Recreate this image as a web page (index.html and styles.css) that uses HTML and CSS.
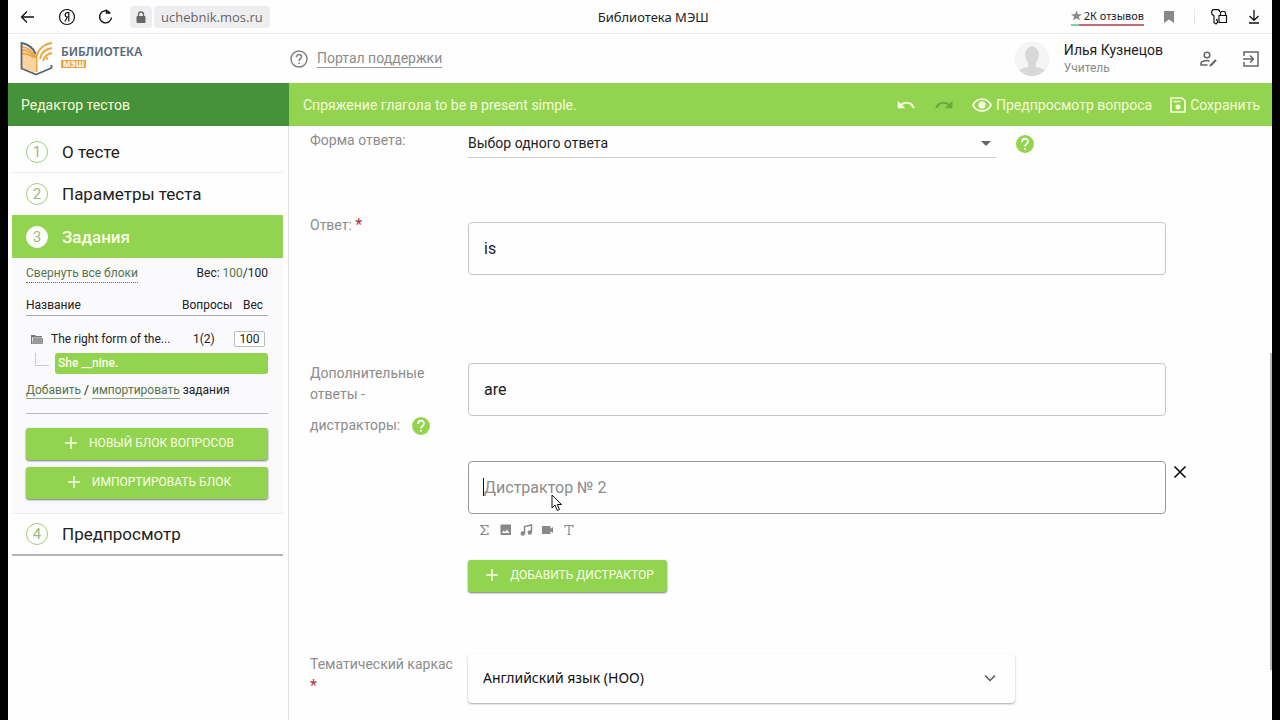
FILE: index.html
```html
<!DOCTYPE html>
<html lang="ru">
<head>
<meta charset="utf-8">
<meta name="viewport" content="width=device-width, initial-scale=1">
<title>Библиотека МЭШ</title>
<link rel="stylesheet" href="styles.css">
</head>
<body>
<svg class="sprite" aria-hidden="true">
  <symbol id="help" viewBox="0 0 20 20"><circle cx="10" cy="10" r="9" fill="currentColor"/><path d="M7 8c0-4.300 6-4.300 6-.5 0 2.500-3 2.500-3 5M10 14v1.800" fill="none" stroke="#fff" stroke-width="1.700"/></symbol>
  <symbol id="plus" viewBox="0 0 14 14"><path d="M7 1v12M1 7h12" stroke="currentColor" stroke-width="1.500" fill="none"/></symbol>
  <symbol id="undo" viewBox="0 0 24 24"><path d="M12.500 8A10.500 10.500 0 0 0 5.600 10.600L2 7v9h9l-3.600-3.600a8 8 0 0 1 12.700 3.600l2.400-.8A10.500 10.500 0 0 0 12.500 8z" fill="currentColor"/></symbol>
</svg>
<div class="page">
  <div class="browser">
    <button class="icon-btn" aria-label="Назад"><svg width="16" height="16" viewBox="0 0 16 16" fill="none" stroke="#111" stroke-width="1.300"><path d="M14 8H2M7 2.500 1.500 8 7 13.500"/></svg></button>
    <button class="icon-btn" aria-label="Яндекс"><svg width="18" height="18" viewBox="0 0 18 18" fill="none" stroke="#111" stroke-width="1.200"><circle cx="9" cy="9" r="7.500"/><path d="M10.800 13.500V4.700H9.400c-3 0-3 4.300 0 4.300h1.400M9.300 9 6.900 13.500"/></svg></button>
    <button class="icon-btn" aria-label="Обновить"><svg width="16" height="16" viewBox="0 0 16 16" fill="none" stroke="#111" stroke-width="1.400"><path d="M11.500 3.300A6 6 0 1 0 13.500 8.500M8.500.5v3.500h4"/></svg></button>
    <div class="address">
      <span class="lock"><svg width="10" height="12" viewBox="0 0 10 12"><path d="M2.500 6V3.500a2.500 2.500 0 0 1 5 0V6" fill="none" stroke="#666" stroke-width="1.300"/><rect x=".5" y="5" width="9" height="7" rx="1" fill="#666"/></svg></span>
      <span class="host">uchebnik.mos.ru</span>
    </div>
    <div class="tab-title">Библиотека МЭШ</div>
    <div class="browser-tools">
      <a class="reviews" href="#"><svg width="11" height="11" viewBox="0 0 24 24"><path d="m12 1 3 8h9l-7 5.500 2.500 8.500-7.500-5-7.500 5L7 14.500 0 9h9z" fill="#888"/></svg>2К отзывов</a>
      <button class="icon-btn" aria-label="Закладка"><svg width="10" height="12" viewBox="0 0 10 12"><path d="M0 0h10v12L5 8.500 0 12z" fill="#888"/></svg></button>
      <span class="divider"></span>
      <button class="icon-btn" aria-label="Пароли"><svg width="17" height="16" viewBox="0 0 17 16" fill="none" stroke="#111" stroke-width="1.200"><path d="M8.500 3V1.500L7.500.7H2L.8 2v3L3 7v6.500l2 1.500 1.500-1.500V12L5.500 11l1-1M8 6.500h7.500v7H8zM9.500 6.500V3.500l1-1h3l1 1v3"/></svg></button>
      <button class="icon-btn" aria-label="Загрузки"><svg width="12" height="15" viewBox="0 0 12 15" fill="none" stroke="#111" stroke-width="1.300"><path d="M6 1v10M1.500 7 6 11.300 10.500 7M1 14h10"/></svg></button>
    </div>
  </div>

  <header class="header">
    <a class="logo" href="#">
      <svg width="34" height="36" viewBox="0 0 34 36">
        <path d="M2 6c6 0 12 4 13 11v15L2 27z" fill="#fbd3a0"/>
        <path d="M2 5.500c7 1 11 5 14 11M2 9c6 0 10 3 13 8M2 12.500c5 0 9 2 11 4" fill="none" stroke="#e9a23d" stroke-width="1.500"/>
        <path d="M16 13C13 7 8 3 1.500 2v25.500L16 33.500l15.500-6.500v-3" fill="none" stroke="#596775" stroke-width="1.800"/>
        <path d="M16.500 31V16C18 8 24 3 32 2M20 18c1-6 5-10 12-11M23 20c1-4 4-7 9-8" fill="none" stroke="#eca43c" stroke-width="1.900"/>
        <circle cx="27" cy="17.500" r="1.300" fill="#eca43c"/>
      </svg>
      <span class="logo-text"><span class="logo-name">БИБЛИОТЕКА</span><span class="logo-tag">МЭШ</span></span>
    </a>
    <a class="support" href="#">
      <svg width="18" height="18" viewBox="0 0 18 18" fill="none" stroke="#808080" stroke-width="1.500"><circle cx="9" cy="9" r="8"/><path d="M6.500 7.200C6.500 3.600 11.500 3.900 11.500 7c0 1.800-2.500 2-2.500 4M9 12.500V14"/></svg>
      <span>Портал поддержки</span>
    </a>
    <div class="user">
      <svg width="36" height="36" viewBox="0 0 36 36"><defs><clipPath id="face"><circle cx="18" cy="18" r="17"/></clipPath></defs><circle cx="18" cy="18" r="17.500" fill="#f5f5f5"/><g clip-path="url(#face)" fill="#d8d8d8"><ellipse cx="18" cy="14" rx="7" ry="8.500"/><path d="M14 20h8v6c7 1 10 3 11 9H3c1-6 4-8 11-9z"/></g></svg>
      <div class="user-text"><div class="user-name">Илья Кузнецов</div><div class="user-role">Учитель</div></div>
      <button class="icon-btn" aria-label="Профиль"><svg width="19" height="18" viewBox="0 0 19 18" fill="none" stroke="#666" stroke-width="1.500"><circle cx="8" cy="5" r="2.800"/><path d="M10.500 11C7 10 2 11 2 13.500V15h6.500"/><path d="m11 16 6-6" stroke-width="2.200"/></svg></button>
      <button class="icon-btn" aria-label="Выход"><svg width="18" height="18" viewBox="0 0 18 18" fill="none" stroke="#666" stroke-width="1.500"><path d="M2 6V2h14v14H2v-4M1 9h10M8 5.500 11.500 9 8 12.500"/></svg></button>
    </div>
  </header>

  <div class="toolbar">
    <div class="toolbar-side">Редактор тестов</div>
    <div class="toolbar-main">
      <h1 class="test-name">Спряжение глагола to be в present simple.</h1>
      <div class="actions">
        <button class="action" aria-label="Отменить"><svg width="20" height="20"><use href="#undo"/></svg></button>
        <button class="action redo" aria-label="Повторить"><svg width="20" height="20"><use href="#undo"/></svg></button>
        <button class="action"><svg width="20" height="16" viewBox="1 4 22 16"><path d="M12 4.500C7 4.500 2.700 7.600 1 12c1.700 4.400 6 7.500 11 7.500s9.300-3.100 11-7.500c-1.700-4.400-6-7.500-11-7.500zm0 13C8 17.500 4.700 15.300 3.200 12 4.700 8.700 8 6.500 12 6.500s7.300 2.200 8.800 5.500c-1.500 3.300-4.800 5.500-8.800 5.500zM12 8a4 4 0 1 0 0 8 4 4 0 0 0 0-8z" fill="currentColor"/></svg>Предпросмотр вопроса</button>
        <button class="action"><svg width="16" height="16" viewBox="0 0 16 16"><path d="M1 1h11l3 3v11H1zM3.500 4.500h7" fill="none" stroke="currentColor" stroke-width="1.700"/><circle cx="8" cy="10" r="2.500" fill="currentColor"/></svg>Сохранить</button>
      </div>
    </div>
  </div>

  <div class="content">
    <aside class="sidebar">
      <nav class="steps">
        <a class="step" href="#"><span class="num">1</span>О тесте</a>
        <a class="step" href="#"><span class="num">2</span>Параметры теста</a>
        <a class="step active" href="#"><span class="num">3</span>Задания</a>
        <div class="blocks">
          <div class="summary"><a class="dotted" href="#">Свернуть все блоки</a><span>Вес: <span class="green">100</span>/100</span></div>
          <table class="table">
            <thead><tr><th>Название</th><th class="count">Вопросы</th><th class="weight">Вес</th></tr></thead>
            <tbody>
              <tr>
                <td><span class="folder"><svg width="12" height="10" viewBox="0 0 12 10"><path d="M0 1h4l1 1h6v1.500H1V10H0z" fill="#777"/><path d="M2 4h10v6H1z" fill="#999"/></svg>The right form of the...</span></td>
                <td class="count">1(2)</td>
                <td class="weight"><input class="weight-input" value="100" aria-label="Вес блока"></td>
              </tr>
            </tbody>
          </table>
          <div class="branch"><span class="elbow"></span><a class="question" href="#">She __nine.</a></div>
          <div class="add-row"><a href="#">Добавить</a> / <a href="#">импортировать</a> задания</div>
          <button class="btn"><svg width="14" height="14"><use href="#plus"/></svg>НОВЫЙ БЛОК ВОПРОСОВ</button>
          <button class="btn"><svg width="14" height="14"><use href="#plus"/></svg>ИМПОРТИРОВАТЬ БЛОК</button>
        </div>
        <a class="step last" href="#"><span class="num">4</span>Предпросмотр</a>
      </nav>
    </aside>

    <main class="main">
      <form class="form">
        <label class="label" for="form-type">Форма ответа:</label>
        <div class="type-row">
          <div class="select-wrap">
            <select class="type-select" id="form-type"><option>Выбор одного ответа</option></select>
            <svg class="arrow" width="10" height="5" viewBox="0 0 10 5"><path d="M0 0h10L5 5z" fill="#666"/></svg>
          </div>
          <button class="help-btn" type="button" aria-label="Справка о форме ответа"><svg width="20" height="20"><use href="#help"/></svg></button>
        </div>

        <label class="label answer-label" for="answer">Ответ: <span class="req">*</span></label>
        <input class="field answer" id="answer" value="is">

        <div class="label extra-label"><label for="d1">Дополнительные ответы -</label>
          <div class="extra-help"><label for="d1">дистракторы:</label><button class="help-btn" type="button" aria-label="Справка о дистракторах"><svg width="20" height="20"><use href="#help"/></svg></button></div>
        </div>
        <div class="distractors">
          <input class="field" id="d1" value="are">
          <div class="second">
            <input class="field focused" placeholder="Дистрактор № 2" aria-label="Дистрактор № 2">
            <span class="caret"></span>
            <svg class="pointer" width="12" height="18" viewBox="0 0 12 18"><path d="M1 1v13l3-3 2.300 5.500 2.200-1L6.300 10.500H10.500z" fill="#fff" stroke="#111"/></svg>
            <button class="remove" type="button" aria-label="Удалить"><svg width="14" height="14" viewBox="0 0 14 14"><path d="m1.500 1.500 11 11m0-11-11 11" stroke="#111" stroke-width="1.700"/></svg></button>
          </div>
          <div class="media">
            <button type="button" aria-label="Формула"><svg width="13" height="12" viewBox="0 0 13 12"><path d="M10 3.500V1.500H3L7 6l-4 4.500h7v-2" fill="none" stroke="#888" stroke-width="1.200"/></svg></button>
            <button type="button" aria-label="Изображение"><svg width="13" height="12" viewBox="0 0 13 12"><path fill-rule="evenodd" d="M2 .5h9.500q.5 0 .5.500v9.500q0 .5-.5.500H2q-.5 0-.5-.5V1q0-.5.5-.5zM3 9h7.500L8 5.500 6 8 4.700 6.500z" fill="#888"/></svg></button>
            <button type="button" aria-label="Аудио"><svg width="13" height="12" viewBox="0 0 13 12"><path d="M4.500 9.500V2.500L11.500 1v7.500" fill="none" stroke="#888" stroke-width="1.500"/><circle cx="2.800" cy="9.500" r="2.200" fill="#888"/><circle cx="9.800" cy="8.500" r="2.200" fill="#888"/></svg></button>
            <button type="button" aria-label="Видео"><svg width="13" height="12" viewBox="0 0 13 12"><path d="M1.500 2h7.500q.5 0 .5.500v2.300L12 3v6L9.500 7.200v2.300q0 .5-.5.500H1.500q-.5 0-.5-.5v-7q0-.5.500-.5z" fill="#888"/></svg></button>
            <button type="button" aria-label="Текст"><svg width="13" height="12" viewBox="0 0 13 12"><path d="M3 3.500v-2h8v2M7 1.500v9M5.500 10.500h3" fill="none" stroke="#888" stroke-width="1.200"/></svg></button>
          </div>
          <button class="btn add" type="button"><svg width="14" height="14"><use href="#plus"/></svg>ДОБАВИТЬ ДИСТРАКТОР</button>
        </div>

        <label class="label theme-label" for="theme">Тематический каркас <span class="req">*</span></label>
        <div class="select-wrap theme">
          <select class="theme-select" id="theme"><option>Английский язык (НОО)</option></select>
          <svg class="chevron" width="12" height="8" viewBox="0 0 12 8"><path d="m1 1.500 5 5 5-5" fill="none" stroke="#555" stroke-width="1.500"/></svg>
        </div>
      </form>
      <span class="scroll-thumb"></span>
    </main>
  </div>
</div>
</body>
</html>
```
FILE: styles.css
```css
* { box-sizing: border-box; }
body {
  margin: 0;
  padding: 0 8px;
  background: #000;
  color: #222;
  font: 13px/20px Roboto, "Noto Sans", sans-serif;
}
button, input, select { font: inherit; color: inherit; }
button { border: 0; padding: 0; background: none; cursor: pointer; }
a { color: inherit; text-decoration: none; }
svg { display: block; flex: none; }
.sprite { position: absolute; width: 0; height: 0; }
.page { display: flex; flex-direction: column; height: 100vh; overflow: hidden; background: #fefefe; }
.icon-btn { display: flex; }

.browser {
  display: flex;
  align-items: center;
  flex: none;
  gap: 22px;
  height: 34px;
  padding: 0 12px;
  border-bottom: 1px solid #ececec;
}
.address { display: flex; gap: 2px; margin-left: -6px; color: #666; font: 13px/22px "Open Sans", sans-serif; }
.address span { display: flex; align-items: center; height: 22px; background: #eeeef0; border-radius: 4px; }
.address .lock { padding: 0 6px; }
.address .host { padding: 0 7px; }
.tab-title { flex: 1; padding-right: 34px; text-align: center; color: #222; font: 13px/20px "Noto Sans", sans-serif; }
.browser-tools { display: flex; align-items: center; gap: 20px; }
.reviews {
  display: flex;
  align-items: center;
  gap: 2px;
  font: 11px/16px "Noto Sans", sans-serif;
  border-bottom: 2px solid;
  border-image: linear-gradient(to right, #8fc9ac 12%, #c66a77 12%) 1;
}
.divider { width: 1px; height: 16px; margin-right: -4px; background: #e8e8e8; }

.header { display: flex; align-items: center; flex: none; height: 49px; padding: 0 12px; }
.logo { display: flex; align-items: center; gap: 7px; width: 270px; }
.logo-text { display: flex; flex-direction: column; align-items: flex-start; gap: 1px; padding-bottom: 4px; }
.logo-name { color: #596775; font: 600 12px/14px "Noto Sans", sans-serif; }
.logo-tag { padding: 0 2px; background: #eca43c; color: #fff; font: bold 8px/8px "Noto Sans", sans-serif; }
.support { display: flex; align-items: center; gap: 9px; color: #8c8c8c; font-size: 14px; line-height: 18px; }
.support span { border-bottom: 1px solid #999; }
.user { display: flex; align-items: center; gap: 24px; margin-left: auto; }
.user-text { margin: 0 12px 0 -10px; line-height: 18px; }
.user-name { font-size: 14px; }
.user-role { color: #8c8c8c; font-size: 12px; }

.toolbar { display: flex; flex: none; height: 43px; color: #f6fbdc; font-size: 14px; }
.toolbar-side { display: flex; align-items: center; flex: none; width: 281px; padding-left: 13px; background: #46923a; }
.toolbar-main { display: flex; flex: 1; align-items: center; justify-content: space-between; padding: 0 12px 0 14px; background: #92d450; }
.test-name { margin: 0; font-size: 14px; font-weight: 400; }
.actions { display: flex; gap: 18px; }
.action { display: flex; align-items: center; gap: 4px; }
.redo { color: #69a83b; }
.redo svg { transform: scaleX(-1); }

.content { display: flex; flex: 1; min-height: 0; }
.sidebar { flex: none; width: 281px; padding: 4px 5px 0 4px; border-right: 1px solid #e2e2e2; }
.step {
  display: flex;
  align-items: center;
  gap: 14px;
  height: 42px;
  padding-left: 14px;
  border-top: 1px solid #ececec;
  font-size: 17px;
}
.step:first-child { border-top-color: transparent; }
.num {
  display: flex;
  align-items: center;
  justify-content: center;
  width: 22px;
  height: 22px;
  border: 1px solid #a5cc7c;
  border-radius: 50%;
  color: #9aba78;
  font-size: 15px;
}
.step.active { height: 43px; margin-top: 1px; background: #92d450; color: #fbffe8; font-weight: 500; border-top-color: #92d450; }
.active .num { background: #fff; border-color: #fff; font-weight: 400; }
.step.last { height: 43px; border-bottom: 2px solid #b5b5b5; }
.blocks { padding: 6px 15px 14px 14px; background: #faf9fc; font-size: 12px; }
.summary { display: flex; justify-content: space-between; line-height: 19px; }
.dotted { line-height: 18px; border-bottom: 1px dotted #57754b; color: #57754b; }
.green, .add-row a { color: #57754b; }
.table { width: 100%; margin-top: 12px; border-collapse: collapse; table-layout: fixed; }
.table th { padding: 0; font-weight: 400; text-align: left; border-bottom: 1px solid #aaa; }
.table td { height: 34px; padding: 12px 0 0; }
.table .count { width: 52px; }
.table td.count { padding-left: 11px; }
.table .weight { width: 34px; }
.table th.weight { padding-left: 9px; }
.folder { display: flex; align-items: center; gap: 8px; padding-left: 5px; white-space: nowrap; }
.weight-input { display: block; width: 31px; height: 16px; padding: 0; border: 1px solid #bbb; border-radius: 2px; background: #fff; text-align: center; }
.branch { display: flex; gap: 6px; margin-top: 3px; }
.elbow { width: 14px; height: 13px; margin-left: 9px; border: solid #ccc; border-width: 0 0 1px 1px; }
.question { flex: 1; padding-left: 3px; border-radius: 3px; background: #92d450; color: #fbffe8; font-weight: 500; line-height: 21px; }
.add-row { margin: 8px 0 14px; padding-bottom: 14px; border-bottom: 1px solid #bbb; line-height: 16px; }
.add-row a { display: inline-block; border-bottom: 1px solid #8ca582; }
.btn {
  display: flex;
  align-items: center;
  justify-content: center;
  gap: 11px;
  width: 100%;
  height: 32px;
  padding: 0 0 2px 4px;
  border-radius: 3px;
  background: #92d450;
  box-shadow: 0 1px 2px #777;
  color: #fbffe8;
  font-size: 12px;
}
.btn + .btn { margin-top: 7px; }

.main { position: relative; flex: 1; min-width: 0; overflow: hidden; }
.form { display: grid; grid-template-columns: 158px minmax(0, 1fr); padding: 0 106px 0 21px; }
.label { padding: 4px 14px 0 0; color: #8c8c8c; font-size: 14px; line-height: 21px; }
.req { color: #b3334a; font-size: 16px; }
.type-row { display: flex; gap: 19px; align-items: center; }
.select-wrap { position: relative; }
.type-row .select-wrap { flex: 0 1 528px; }
.type-select {
  width: 100%;
  height: 32px;
  padding: 2px 0 0;
  border: 0;
  border-bottom: 1px solid #ccc;
  background: none;
  appearance: none;
  font-size: 14px;
}
.arrow { position: absolute; right: 5px; top: 15px; pointer-events: none; }
.help-btn { color: #92d450; padding-top: 4px; }
.answer-label { margin-top: 52px; }
.field {
  display: block;
  width: 100%;
  height: 53px;
  padding: 0 15px;
  border: 1px solid #c6c6c6;
  border-radius: 4px;
  background: none;
  font-size: 16px;
}
.answer { margin-top: 64px; }
.extra-label { margin-top: 84px; }
.extra-help { display: flex; align-items: center; gap: 11px; margin-top: 10px; }
.extra-help .help-btn { padding: 0; }
.distractors { margin-top: 88px; }
.second { position: relative; margin-top: 45px; }
.focused { border-color: #999; }
.focused::placeholder { color: #8c8c8c; opacity: 1; }
.caret { position: absolute; left: 15px; top: 17px; width: 1px; height: 18px; background: #111; }
.pointer { position: absolute; left: 83px; top: 33px; pointer-events: none; }
.remove { position: absolute; right: -21px; top: 4px; }
.media { display: flex; gap: 8px; padding: 10px 10px 0; }
.btn.add { width: 199px; margin-top: 24px; }
.theme-label { margin-top: 58px; }
.theme { width: 547px; max-width: 100%; margin-top: 62px; }
.theme-select {
  width: 100%;
  height: 49px;
  padding: 0 15px 2px;
  border: 0;
  border-radius: 4px;
  background: #fefefe;
  box-shadow: 0 1px 2px #aaa;
  appearance: none;
  color: #111;
  font: 14px/20px "Noto Sans", sans-serif;
}
.chevron { position: absolute; right: 19px; top: 20px; pointer-events: none; }
.scroll-thumb { position: absolute; right: 0; top: 227px; width: 2px; height: 317px; background: #b4bcc2; }
```
